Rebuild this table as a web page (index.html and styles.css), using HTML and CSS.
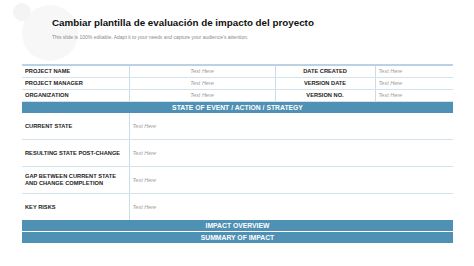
FILE: index.html
```html
<!DOCTYPE html>
<html lang="es">
<head>
<meta charset="utf-8">
<link rel="stylesheet" href="styles.css">
</head>
<body>
<div class="slide">
  <header class="head">
    <span class="deco deco-big"></span>
    <span class="deco deco-small"></span>
    <h1 class="title">Cambiar plantilla de evaluación de impacto del proyecto</h1>
    <p class="sub">This slide is 100% editable. Adapt it to your needs and capture your audience's attention.</p>
  </header>
  <table class="grid">
    <colgroup>
      <col class="c1"><col class="c2"><col class="c3"><col class="c4">
    </colgroup>
    <tbody>
      <tr class="r-s">
        <td class="lbl">PROJECT NAME</td>
        <td class="val center">Text Here</td>
        <td class="lbl center">DATE CREATED</td>
        <td class="val">Text Here</td>
      </tr>
      <tr class="r-s">
        <td class="lbl">PROJECT MANAGER</td>
        <td class="val center">Text Here</td>
        <td class="lbl center">VERSION DATE</td>
        <td class="val">Text Here</td>
      </tr>
      <tr class="r-s">
        <td class="lbl">ORGANIZATION</td>
        <td class="val center">Text Here</td>
        <td class="lbl center">VERSION NO.</td>
        <td class="val">Text Here</td>
      </tr>
      <tr class="r-h">
        <td class="bar" colspan="4">STATE OF EVENT / ACTION / STRATEGY</td>
      </tr>
      <tr class="r-l">
        <td class="lbl">CURRENT STATE</td>
        <td class="val" colspan="3">Text Here</td>
      </tr>
      <tr class="r-l">
        <td class="lbl">RESULTING STATE POST-CHANGE</td>
        <td class="val" colspan="3">Text Here</td>
      </tr>
      <tr class="r-l">
        <td class="lbl">GAP BETWEEN CURRENT STATE<br>AND CHANGE COMPLETION</td>
        <td class="val" colspan="3">Text Here</td>
      </tr>
      <tr class="r-l last">
        <td class="lbl">KEY RISKS</td>
        <td class="val" colspan="3">Text Here</td>
      </tr>
      <tr class="r-h">
        <td class="bar" colspan="4">IMPACT OVERVIEW</td>
      </tr>
      <tr class="r-h">
        <td class="bar sep" colspan="4">SUMMARY OF IMPACT</td>
      </tr>
    </tbody>
  </table>
</div>
</body>
</html>
```
FILE: styles.css
```css
html, body {
  margin: 0;
  padding: 0;
  background: #ffffff;
}
.slide {
  width: 474px;
  height: 266px;
  overflow: hidden;
  font-family: "Liberation Sans", Arial, sans-serif;
}
.head {
  position: relative;
  height: 64px;
  padding-left: 52px;
  box-sizing: border-box;
}
.deco {
  position: absolute;
  border-radius: 50%;
  background: #f7f7f7;
}
.deco-big {
  left: 22px;
  top: 5px;
  width: 56px;
  height: 56px;
}
.deco-small {
  left: 13px;
  top: 3px;
  width: 18px;
  height: 18px;
  background: #f4f4f4;
}
.title {
  position: relative;
  margin: 0;
  padding-top: 17px;
  font-size: 9.8px;
  line-height: 12px;
  font-weight: bold;
  color: #111111;
}
.sub {
  position: relative;
  margin: 5px 0 0;
  font-size: 5px;
  line-height: 6px;
  color: #8a8a8a;
}
.grid {
  margin-left: 22px;
  width: 431px;
  table-layout: fixed;
  border-collapse: collapse;
  border-top: 2px solid #bcd2e2;
}
.c1 { width: 107px; }
.c2 { width: 146px; }
.c3 { width: 100px; }
.c4 { width: 78px; }
.grid td {
  padding: 0 3px;
  border-bottom: 1px solid #d4e2eb;
  white-space: nowrap;
  overflow: hidden;
}
.grid td + td {
  border-left: 1px solid #cbdbe7;
}
.r-s td { height: 11px; }
.r-l td { height: 26px; }
.r-h td { height: 11px; }
.lbl {
  font-size: 5.7px;
  line-height: 7px;
  font-weight: bold;
  color: #222222;
}
.val {
  font-size: 5.5px;
  line-height: 7px;
  font-style: italic;
  color: #9a9a9a;
}
.center { text-align: center; }
.last td { border-bottom: none; }
.grid .bar {
  background: #4f91b4;
  color: #ffffff;
  font-size: 6.8px;
  line-height: 8px;
  font-weight: bold;
  text-align: center;
  border-bottom: none;
}
.grid .sep {
  border-top: 1px solid #ffffff;
}
```
